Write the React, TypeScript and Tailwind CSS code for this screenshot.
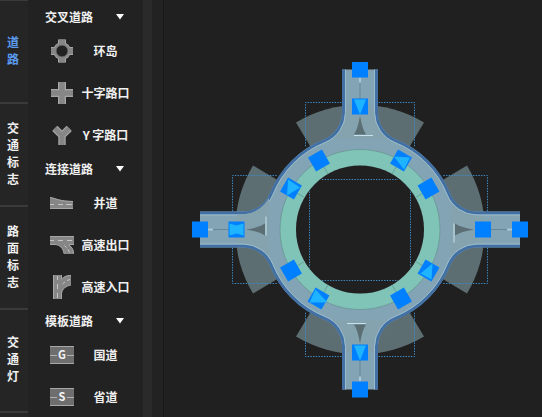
import React from "react";

type Kind = "ring" | "cross" | "wye" | "merge" | "exit" | "entry" | "G" | "S";

const tabs = ["道路", "交通标志", "路面标志", "交通灯"];

const groups: { title: string; items: { label: string; kind: Kind }[] }[] = [
  {
    title: "交叉道路",
    items: [
      { label: "环岛", kind: "ring" },
      { label: "十字路口", kind: "cross" },
      { label: "Y 字路口", kind: "wye" },
    ],
  },
  {
    title: "连接道路",
    items: [
      { label: "并道", kind: "merge" },
      { label: "高速出口", kind: "exit" },
      { label: "高速入口", kind: "entry" },
    ],
  },
  {
    title: "模板道路",
    items: [
      { label: "国道", kind: "G" },
      { label: "省道", kind: "S" },
    ],
  },
];

function RoadIcon({ kind }: { kind: Kind }) {
  const edge = "#a6a6a6";
  const road = "#868686";
  return (
    <svg viewBox="0 0 24 24" className="size-6 shrink-0" aria-hidden="true">
      {kind === "ring" && (
        <>
          <path d="M12 .5V23.5M1 12H23" stroke={edge} strokeWidth="8" />
          <circle cx="12" cy="12" r="9" fill={edge} />
          <path d="M12 .5V23.5M1 12H23" stroke={road} strokeWidth="6" />
          <circle cx="12" cy="12" r="8" fill={road} />
          <circle cx="12" cy="12" r="5.8" fill="#222222" stroke="#6a6a6a" strokeWidth=".7" />
        </>
      )}
      {kind === "cross" && (
        <>
          <path d="M12 1V23M1 12H23" stroke={edge} strokeWidth="8" />
          <path d="M12 1V23M1 12H23" stroke={road} strokeWidth="5.5" />
        </>
      )}
      {kind === "wye" && (
        <>
          <path d="M12 22V12.5L4.8 5.3M12 12.5L19.2 5.3" fill="none" stroke={edge} strokeWidth="7.4" />
          <path d="M12 22V12.5L4.8 5.3M12 12.5L19.2 5.3" fill="none" stroke={road} strokeWidth="5" />
        </>
      )}
      {kind === "merge" && (
        <>
          <path d="M0 6C6 7 10 10 23 10V18H0Z" fill={road} />
          <path d="M0 6.5C6 7.5 10 10.5 23 10.5M0 17.5H23" fill="none" stroke={edge} />
          <path d="M0 13.5H4M8 13.5H13M16 13.5H22" stroke="#c4c4c4" />
        </>
      )}
      {kind === "exit" && (
        <>
          <path d="M0 3H24V11.5H19C22 14 24 17 24 21H14C13 15 10 12 5 11.5H0Z" fill={road} />
          <path d="M0 3.5H24M0 11.5H5C10 12 13 15 14 20.5M19 11.5H24M19 12C22 14 23.5 17 23.5 20.5" fill="none" stroke={edge} />
          <path d="M0 7.5H4M8 7.5H13M17 7.5H22M14.5 12.5L16.5 14.5M18 16.5L19.5 19.5" stroke="#c4c4c4" />
        </>
      )}
      {kind === "entry" && (
        <>
          <path d="M3 0H12V4C14 1.5 17 0 21 0V10C16 11 13 13 12 18V24H3Z" fill={road} />
          <path d="M3.5 0V24M11.5 0V4C14 1.5 17 .5 21 .5M21 10C16 11 12 14 11.5 18V24" fill="none" stroke={edge} />
          <path d="M7.5 1V5M7.5 9V14M7.5 18V23M12.5 9L15 7M17 5.5L20 4.5" stroke="#c4c4c4" />
        </>
      )}
      {(kind === "G" || kind === "S") && (
        <>
          <path d="M0 3H24V21H0Z" fill="#6e6e6e" />
          <path d="M0 3.5H24M0 20.5H24" stroke="#a8a8a8" />
          <path d="M0 12.5H7M17 12.5H24" stroke="#b0b0b0" />
          <text x="12" y="16" textAnchor="middle" fill="#f4f4f4" className="text-[11px] font-bold">
            {kind}
          </text>
        </>
      )}
    </svg>
  );
}

function Handle({ x, y, angle = 0, arrow }: { x: number; y: number; angle?: number; arrow?: string }) {
  return (
    <g transform={`translate(${x} ${y})`}>
      <rect x="-8" y="-8" width="16" height="16" fill="#007fff" transform={`rotate(${angle})`} />
      {arrow && <path d={arrow} fill="#1fb4ff" />}
    </g>
  );
}

const kerb =
  "M-16.5 -160V-117A30.5 30.5 0 0 1 -35.7 -88.7A95.5 95.5 0 0 0 -88.7 -35.7A30.5 30.5 0 0 1 -117 -16.5H-160";
const kerbInner =
  "M-14.5 -160V-117A32.5 32.5 0 0 1 -35 -87A93.5 93.5 0 0 0 -87 -35A32.5 32.5 0 0 1 -117 -14.5H-160";
const roadBody =
  "M-18 -160V-117A29 29 0 0 1 -36.3 -90A97 97 0 0 0 -90 -36.3A29 29 0 0 1 -117 -18H-160V18H-117A29 29 0 0 1 -90 36.3A97 97 0 0 0 -36.3 90A29 29 0 0 1 -18 117V160H18V117A29 29 0 0 1 36.3 90A97 97 0 0 0 90 36.3A29 29 0 0 1 117 18H160V-18H117A29 29 0 0 1 90 -36.3A97 97 0 0 0 36.3 -90A29 29 0 0 1 18 -117V-160Z";
const quarterTurns = [0, 90, 180, 270];
const down = "M-6 -7H6L0 8Z";

function Roundabout() {
  return (
    <svg viewBox="-168 -167.5 336 336" className="size-[336px] shrink-0" role="img" aria-label="环岛">
      {quarterTurns.map((a) => (
        <path key={a} transform={`rotate(${a})`} d="M0 0L-64 -107A124.5 124.5 0 0 1 64 -107Z" fill="#5c6e72" />
      ))}
      <path d={roadBody} fill="#82a4b5" />
      {quarterTurns.map((a) => (
        <g key={a} transform={`rotate(${a})`}>
          <path d="M-15 -123Q0 -125 15 -123V-117A32 32 0 0 0 32 -91H-32A32 32 0 0 0 -15 -117Z" fill="#84a3ae" />
          <path d={kerb} fill="none" stroke="#4270a5" strokeWidth="3" strokeLinejoin="round" />
          <path d={kerbInner} fill="none" stroke="#9abccc" strokeWidth="1" strokeLinejoin="round" />
          <path d="M0 -152V-116" stroke="#668794" />
          <path d="M0 -152V-147" stroke="#a9cbd8" strokeWidth="2" />
          <path d="M0 -114Q-2 -101 -6 -95H6Q2 -101 0 -114Z" fill="#5b6e74" />
          <path d="M-6 -94H13" stroke="#c7e2ed" />
        </g>
      ))}
      <circle r="72" fill="none" stroke="#80c4b7" strokeWidth="16" />
      <circle r="80" fill="none" stroke="#65918f" strokeWidth=".7" />
      <circle r="64" fill="#202020" />
      {[30, 60, 120, 150, 210, 240, 300, 330].map((a) => (
        <path key={a} transform={`rotate(${a})`} d="M0 -80V-64" stroke="#629e95" strokeWidth=".8" />
      ))}
      <g fill="none" stroke="#3d8cc8" strokeDasharray="1.4 1.3">
        <path d="M-18.5 -127H-54.5V-82M18.5 -127H54.5V-82M-38 -50H38" />
        <path d="M-18.5 127H-54.5V82M18.5 127H54.5V82M-38 51H38" />
        <path d="M-127.5 -18.5V-54H-82M-127.5 18.5V54H-82M-50.5 -38V38" />
        <path d="M127.5 -18.5V-54H82M127.5 18.5V54H82M50.5 -38V38" />
      </g>
      <Handle x={0} y={-160} />
      <Handle x={0} y={-123} arrow={down} />
      <Handle x={0} y={160} />
      <Handle x={0} y={123} arrow={down} />
      <Handle x={-160} y={0} />
      <Handle x={-123.5} y={0} arrow="M-7 -6L0 -4L7 -6V6L0 4L-7 6Z" />
      <Handle x={160} y={0} />
      <Handle x={123} y={0} />
      <Handle x={-41} y={-69} angle={-30} />
      <Handle x={-69} y={-41} angle={30} arrow="M-3 -9L9 -1L-4 7Z" />
      <Handle x={41} y={-69} angle={30} arrow="M-7 -4L9 -3L3 9Z" />
      <Handle x={68.5} y={-41} angle={-30} />
      <Handle x={-69} y={41} angle={-30} />
      <Handle x={-41.5} y={69} angle={30} arrow="M-3 -9L9 4L-9 4Z" />
      <Handle x={41} y={69} angle={-30} />
      <Handle x={68.5} y={41} angle={30} arrow="M4 -7L3 9L-8 3Z" />
    </svg>
  );
}

export default function App() {
  return (
    <div className="flex h-screen overflow-hidden bg-[#202020] font-['Noto_Sans_CJK_SC',sans-serif] text-xs font-bold text-[#f0f0f0]">
      <nav className="flex w-7 shrink-0 flex-col border-t border-[#3a3a3a] bg-[#252525]">
        {tabs.map((tab, i) => (
          <button
            key={tab}
            className={
              "flex h-[103px] shrink-0 flex-col items-center justify-center border-b-2 border-[#3a3a3a] pr-0.5 pb-1 leading-[17px] " +
              (i === 0 ? "text-[#5b9cf0]" : "")
            }
          >
            {tab.split("").map((c, k) => (
              <span key={k}>{c}</span>
            ))}
          </button>
        ))}
      </nav>

      <aside className="flex w-[115px] shrink-0 flex-col bg-[#222222] pt-1">
        {groups.map((g) => (
          <section key={g.title} className="shrink-0">
            <button className="flex h-[26px] w-full items-center justify-between pr-[19px] pl-[17px]">
              {g.title}
              <svg viewBox="0 0 8 6" className="h-1.5 w-2" aria-hidden="true">
                <path d="M0 0H8L4 5.5Z" fill="#ffffff" />
              </svg>
            </button>
            {g.items.map((item) => (
              <button key={item.label} className="flex h-[42px] w-full items-center pr-1.5 pl-[22px]">
                <RoadIcon kind={item.kind} />
                <span className="flex-1 text-center whitespace-nowrap">{item.label}</span>
              </button>
            ))}
          </section>
        ))}
      </aside>
      <div className="w-[9px] shrink-0 bg-[#2a2a2a]" />
      <div className="w-3 shrink-0 border-r border-[#181818] bg-[#222222]" />
      <main className="flex min-w-0 flex-1 items-start pt-[62px] pl-7">
        <Roundabout />
      </main>
    </div>
  );
}
